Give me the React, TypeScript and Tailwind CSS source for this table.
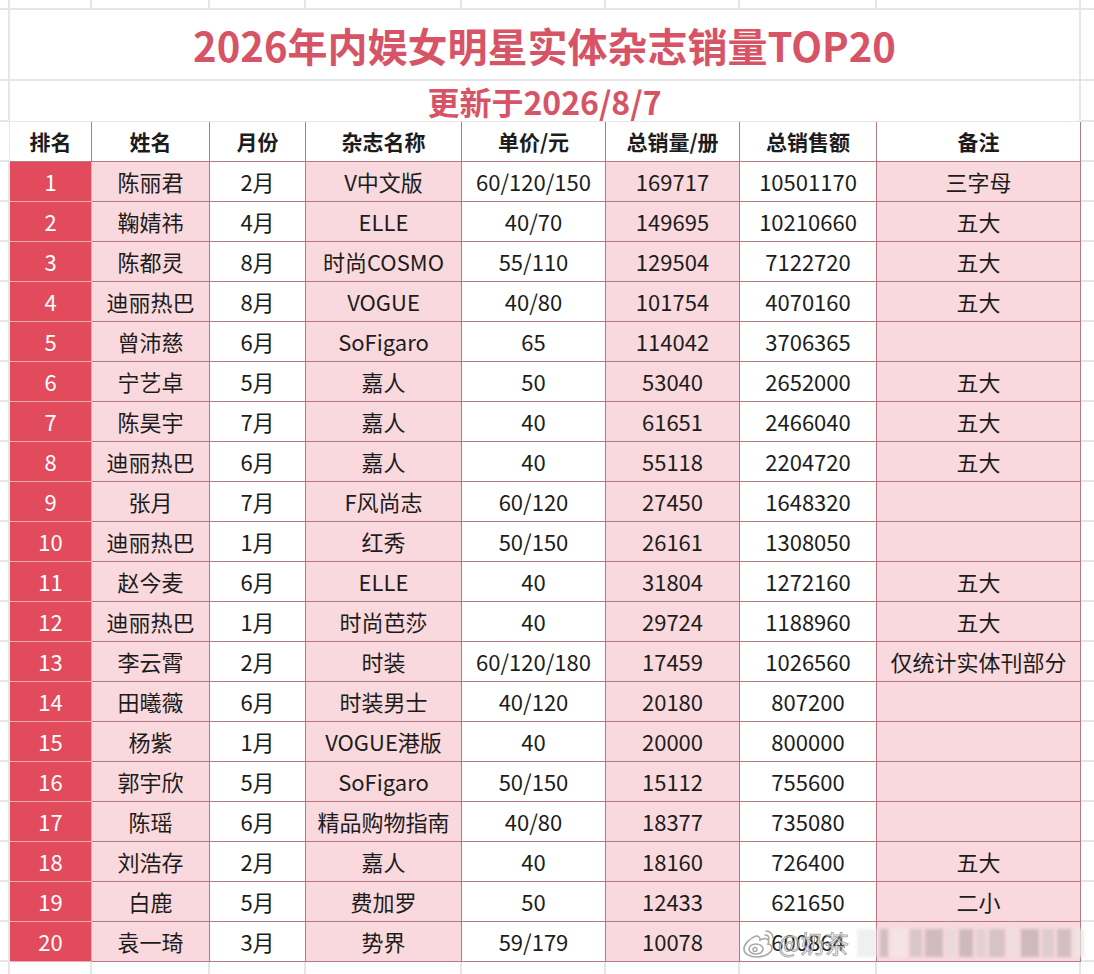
import React from 'react';

type Row = [number, string, string, string, string, string, string, string];

const rows: Row[] = [
  [1, '陈丽君', '2月', 'V中文版', '60/120/150', '169717', '10501170', '三字母'],
  [2, '鞠婧祎', '4月', 'ELLE', '40/70', '149695', '10210660', '五大'],
  [3, '陈都灵', '8月', '时尚COSMO', '55/110', '129504', '7122720', '五大'],
  [4, '迪丽热巴', '8月', 'VOGUE', '40/80', '101754', '4070160', '五大'],
  [5, '曾沛慈', '6月', 'SoFigaro', '65', '114042', '3706365', ''],
  [6, '宁艺卓', '5月', '嘉人', '50', '53040', '2652000', '五大'],
  [7, '陈昊宇', '7月', '嘉人', '40', '61651', '2466040', '五大'],
  [8, '迪丽热巴', '6月', '嘉人', '40', '55118', '2204720', '五大'],
  [9, '张月', '7月', 'F风尚志', '60/120', '27450', '1648320', ''],
  [10, '迪丽热巴', '1月', '红秀', '50/150', '26161', '1308050', ''],
  [11, '赵今麦', '6月', 'ELLE', '40', '31804', '1272160', '五大'],
  [12, '迪丽热巴', '1月', '时尚芭莎', '40', '29724', '1188960', '五大'],
  [13, '李云霄', '2月', '时装', '60/120/180', '17459', '1026560', '仅统计实体刊部分'],
  [14, '田曦薇', '6月', '时装男士', '40/120', '20180', '807200', ''],
  [15, '杨紫', '1月', 'VOGUE港版', '40', '20000', '800000', ''],
  [16, '郭宇欣', '5月', 'SoFigaro', '50/150', '15112', '755600', ''],
  [17, '陈瑶', '6月', '精品购物指南', '40/80', '18377', '735080', ''],
  [18, '刘浩存', '2月', '嘉人', '40', '18160', '726400', '五大'],
  [19, '白鹿', '5月', '费加罗', '50', '12433', '621650', '二小'],
  [20, '袁一琦', '3月', '势界', '59/179', '10078', '600864', ''],
];

const headers = ['排名', '姓名', '月份', '杂志名称', '单价/元', '总销量/册', '总销售额', '备注'];

// column widths, rank .. note
const cols = ['w-[82px]', 'w-[118px]', 'w-[96px]', 'w-[156px]', 'w-[144px]', 'w-[134px]', 'w-[137px]', 'w-[204px]'];
// pink / white alternation after the red rank column
const fills = ['', 'bg-[#f9d9dd]', 'bg-white', 'bg-[#f9d9dd]', 'bg-white', 'bg-[#f9d9dd]', 'bg-white', 'bg-[#f9d9dd]'];

const grid = 'border-[#e6e6e6]';
const line = 'border-[#b47884]';

function Margin({ left }: { left?: boolean }) {
  return left ? (
    <div className={`w-[10px] shrink-0 border-r-2 border-b-2 ${grid}`} />
  ) : (
    <div className={`flex-1 border-b-2 ${grid}`} />
  );
}

function Strip({ height }: { height: string }) {
  return (
    <div className={`flex ${height}`}>
      <div className={`w-[10px] shrink-0 border-r-2 ${grid}`} />
      {cols.map((c, i) => (
        <div key={i} className={`${c} shrink-0 border-r-2 ${grid}`} />
      ))}
      <div className="flex-1" />
    </div>
  );
}

function Watermark() {
  return (
    <div className="absolute left-[742px] top-[926px] flex h-[34px] w-[342px] items-center opacity-75">
      <svg width="34" height="30" viewBox="0 0 34 30">
        <path
          d="M14 8c-6 2-12 8-12 13 0 5 6 8 13 8 9 0 15-5 15-9 0-3-3-4-4-4 1-2 1-4-1-5-2-1-5 0-7 1 0-2 0-4-4-4z"
          fill="white"
          stroke="#8a8a8a"
          strokeWidth="1.6"
        />
        <ellipse cx="14" cy="21" rx="7" ry="5" fill="none" stroke="#8a8a8a" strokeWidth="1.6" />
        <circle cx="13" cy="21.5" r="2" fill="none" stroke="#8a8a8a" strokeWidth="1.4" />
        <path d="M24 3c4 0 7 3 7 7" fill="none" stroke="#8a8a8a" strokeWidth="1.6" strokeLinecap="round" />
        <path d="M23 7c2 0 4 1 4 4" fill="none" stroke="#8a8a8a" strokeWidth="1.6" strokeLinecap="round" />
      </svg>
      <span className="ml-[2px] text-[24px] leading-none text-white [-webkit-text-stroke:1px_#8c8c8c]">@奶茶</span>
      <div className="ml-[8px] flex h-[28px] flex-1 items-stretch gap-[3px] blur-[1.5px]">
        <div className="w-[20px] bg-[#ececec]" />
        <div className="w-[8px] bg-[#c4b6b9]" />
        <div className="w-[16px] bg-[#f3e8ea]" />
        <div className="w-[12px] bg-[#cfc0c3]" />
        <div className="w-[18px] bg-[#c3b3b6]" />
        <div className="w-[10px] bg-[#e6d9dc]" />
        <div className="w-[14px] bg-[#bfb0b3]" />
        <div className="w-[10px] bg-[#dccdd0]" />
        <div className="w-[16px] bg-[#cbbcbf]" />
        <div className="w-[10px] bg-[#ecdfe2]" />
        <div className="w-[18px] bg-[#c0b0b3]" />
        <div className="w-[12px] bg-[#d6c8cb]" />
        <div className="w-[14px] bg-[#c6b6b9]" />
        <div className="w-[10px] bg-[#e8e8e8]" />
      </div>
    </div>
  );
}

export default function App() {
  return (
    <div
      className="relative h-[974px] w-[1094px] overflow-hidden bg-white text-[#1c1c1c]"
      style={{ fontFamily: '"Noto Sans CJK SC", "Noto Sans", sans-serif' }}
    >
      <div className={`border-b-2 ${grid}`}>
        <Strip height="h-[8px]" />
      </div>

      {/* Title */}
      <div className="flex h-[71px]">
        <Margin left />
        <div
          className={`flex w-[1071px] shrink-0 items-center justify-center border-r-2 border-b-2 ${grid} text-[40px] font-bold leading-none text-[#d75466]`}
        >
          2026年内娱女明星实体杂志销量TOP20
        </div>
        <Margin />
      </div>

      {/* Subtitle */}
      <div className="flex h-[41px]">
        <div className={`w-[10px] shrink-0 border-r-2 border-b-2 ${grid}`} />
        <div
          className={`flex w-[1071px] shrink-0 items-center justify-center border-r-2 ${grid} border-b ${line} text-[32px] font-bold leading-none text-[#d75466]`}
        >
          更新于2026/8/7
        </div>
        <Margin />
      </div>

      {/* Header */}
      <div className="flex h-[40px]">
        <div className={`w-[10px] shrink-0 border-r ${line} border-b-2 ${grid}`} />
        {headers.map((h, i) => (
          <div
            key={h}
            className={`${cols[i]} flex shrink-0 items-center justify-center border-r border-b ${line} bg-white text-[21px] font-bold`}
          >
            {h}
          </div>
        ))}
        <Margin />
      </div>

      {/* Rows */}
      {rows.map((r) => (
        <div key={r[0]} className="flex h-[40px]">
          <div className={`w-[10px] shrink-0 border-r-2 border-b-2 ${grid}`} />
          {r.map((v, i) =>
            i === 0 ? (
              <div
                key={i}
                className={`${cols[i]} flex shrink-0 items-center justify-center border-r border-b border-[#f2aab1] bg-[#e24b5c] text-[22px] text-white`}
              >
                {v}
              </div>
            ) : (
              <div
                key={i}
                className={`${cols[i]} ${fills[i]} flex shrink-0 items-center justify-center whitespace-nowrap border-r border-b ${line} text-[22px]`}
              >
                {v}
              </div>
            ),
          )}
          <Margin />
        </div>
      ))}

      <Strip height="h-[12px]" />
      <Watermark />
    </div>
  );
}
